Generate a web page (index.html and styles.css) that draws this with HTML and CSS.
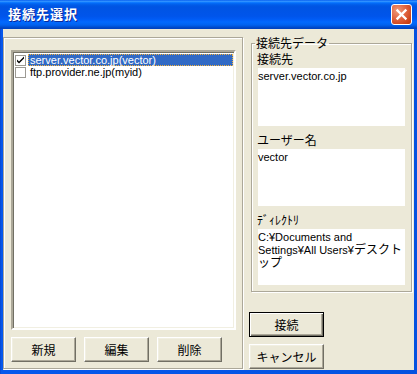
FILE: index.html
```html
<!DOCTYPE html>
<html lang="ja">

<head>
    <meta charset="UTF-8">
    <title>接続先選択</title>
    <link rel="stylesheet" href="styles.css">
</head>

<body>
    <div class="window">
        <div class="titlebar">
            <span class="title">接続先選択</span>
            <button type="button" class="close-btn">
                <svg width="13" height="13" viewBox="0 0 13 13">
                    <path d="M2.5 2.5 L10.5 10.5 M10.5 2.5 L2.5 10.5" stroke="#fff" stroke-width="2.4" stroke-linecap="square" fill="none" />
                </svg>
            </button>
        </div>

        <div class="client">
            <div class="left-panel">
                <div class="listbox">
                    <div class="item selected">
                        <span class="check">
                            <svg width="9" height="9" viewBox="0 0 9 9">
                                <path d="M1 3.5 L3 5.5 L8 0.5 L8 2.5 L3 7.5 L1 5.5 Z" fill="#000" />
                            </svg>
                        </span>
                        <span class="item-text">server.vector.co.jp(vector)</span>
                    </div>
                    <div class="item">
                        <span class="check"></span>
                        <span class="item-text">ftp.provider.ne.jp(myid)</span>
                    </div>
                </div>

                <div class="button-row">
                    <button type="button" class="btn">新規</button>
                    <button type="button" class="btn">編集</button>
                    <button type="button" class="btn">削除</button>
                </div>
            </div>

            <div class="right-panel">
                <fieldset class="group">
                    <legend>接続先データ</legend>

                    <div class="field-label first">接続先</div>
                    <div class="field-value tall">server.vector.co.jp</div>

                    <div class="field-label">ユーザー名</div>
                    <div class="field-value">vector</div>

                    <div class="field-label">ﾃﾞｨﾚｸﾄﾘ</div>
                    <div class="field-value short">C:¥Documents and Settings¥All Users¥<span class="ja">デスクトップ</span></div>
                </fieldset>

                <div class="action-buttons">
                    <button type="button" class="btn default">接続</button>
                    <button type="button" class="btn">キャンセル</button>
                </div>
            </div>
        </div>
    </div>
</body>

</html>
```

FILE: styles.css
```css
/* Basic reset */
* {
    margin: 0;
    padding: 0;
    box-sizing: border-box;
}

body {
    width: 417px;
    height: 374px;
    overflow: hidden;
    background-color: #ffffff;
    font-family: 'Liberation Sans', 'Noto Sans CJK JP', sans-serif;
    font-size: 12px;
    color: #000000;
}

.window {
    width: 417px;
    height: 374px;
    display: flex;
    flex-direction: column;
    background: linear-gradient(90deg, #0841c9 0px, #0757e8 1px, #0658ec 2px, #0552e0 100%);
}

/* Title bar */
.titlebar {
    height: 29px;
    flex-shrink: 0;
    display: flex;
    align-items: center;
    justify-content: space-between;
    padding: 0 5px 1px 8px;
    background: linear-gradient(180deg, #0058ee 0%, #3593ff 4%, #288eff 6%, #127dff 8%, #036ffc 10%, #0262ee 14%, #0057e5 20%, #0054e3 24%, #0055eb 56%, #005bf5 66%, #026afe 76%, #0062ef 86%, #0052d6 92%, #0046c4 96%, #0042bd 100%);
}

.title {
    color: #ffffff;
    font-family: 'Noto Sans CJK JP', sans-serif;
    font-weight: 700;
    font-size: 13px;
    letter-spacing: 1px;
    line-height: 14px;
    text-shadow: 1px 1px 0 #0a2a9a;
}

.close-btn {
    width: 21px;
    height: 21px;
    display: flex;
    align-items: center;
    justify-content: center;
    border: 1px solid #ffffff;
    border-radius: 3px;
    background: radial-gradient(circle at 30% 30%, #f09a7a 0%, #e06440 45%, #cc4218 80%, #b8380f 100%);
}

/* Client area */
.client {
    flex: 1;
    display: flex;
    gap: 6px;
    margin: 0 3px 4px 3px;
    padding: 8px 2px 1px 0;
    background-color: #ece9d8;
}

.left-panel {
    width: 240px;
    display: flex;
    flex-direction: column;
    padding: 12px 6px 0 7px;
    border: 1px solid #aca899;
    box-shadow: inset 1px 1px 0 #ffffff, 1px 1px 0 #ffffff;
}

.listbox {
    width: 225px;
    height: 280px;
    background-color: #ffffff;
    border: 2px solid;
    border-color: #aca899 #ffffff #ffffff #aca899;
    box-shadow: inset 1px 1px 0 #716f64, inset -1px -1px 0 #f1efe2;
    padding: 2px 1px 0 2px;
}

.item {
    display: flex;
    align-items: center;
    height: 12px;
}

.check {
    width: 11px;
    height: 11px;
    flex-shrink: 0;
    display: flex;
    align-items: center;
    justify-content: center;
    background-color: #ffffff;
    border: 1px solid #9c9a94;
    margin-right: 2px;
}

.item-text {
    flex: 1;
    height: 12px;
    font-size: 11px;
    line-height: 10px;
    padding-left: 1px;
    border: 1px dotted transparent;
    white-space: nowrap;
}

.item.selected .item-text {
    background-color: #316ac5;
    color: #ffffff;
    border-color: #f5b23b;
}

.button-row {
    display: flex;
    gap: 8px;
    margin-top: 7px;
}

/* Buttons */
.btn {
    width: 65px;
    height: 25px;
    font-family: 'Noto Sans CJK JP', sans-serif;
    font-size: 12px;
    line-height: 14px;
    color: #000000;
    background-color: #ece9d8;
    border: 1px solid;
    border-color: #ffffff #716f64 #716f64 #ffffff;
    box-shadow: inset -1px -1px 0 #aca899, inset 1px 1px 0 #f1efe2;
}

.btn.default {
    border-color: #000000;
    box-shadow: inset 1px 1px 0 #ffffff, inset -1px -1px 0 #716f64, inset -2px -2px 0 #aca899;
}

/* Right side */
.right-panel {
    flex: 1;
    display: flex;
    flex-direction: column;
}

.group {
    margin-left: 2px;
    padding: 0 6px 6px 6px;
    border: 1px solid #aca899;
    box-shadow: inset 1px 1px 0 #ffffff, 1px 1px 0 #ffffff;
    min-width: 0;
}

.group legend {
    font-family: 'Noto Sans CJK JP', sans-serif;
    font-size: 12px;
    line-height: 12px;
    padding: 0 1px;
    margin-left: -3px;
}

.field-label {
    font-family: 'Noto Sans CJK JP', sans-serif;
    font-size: 12px;
    line-height: 14px;
    margin-top: 7px;
    margin-bottom: 2px;
    margin-left: -1px;
}

.field-label.first {
    margin-top: 3px;
}

.field-value {
    height: 57px;
    background-color: #ffffff;
    font-size: 11px;
    line-height: 13px;
    padding: 2px 1px 0 0;
    line-break: loose;
}

.field-value.tall {
    height: 58px;
}

.field-value.short {
    height: 56px;
}

.field-value .ja {
    font-size: 12px;
}

.action-buttons {
    display: flex;
    flex-direction: column;
    gap: 7px;
    margin-top: 20px;
}

.action-buttons .btn {
    width: 75px;
}
```
